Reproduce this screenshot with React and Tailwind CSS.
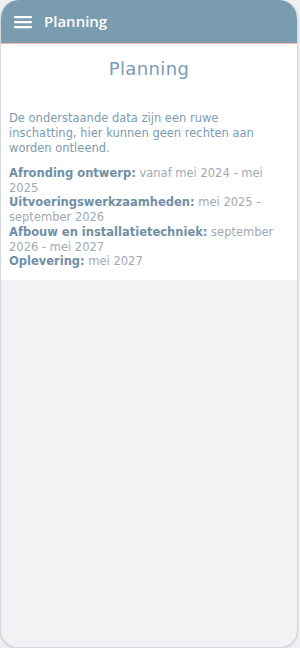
import React from "react";

const items = [
  { label: "Afronding ontwerp:", value: "vanaf mei 2024 - mei 2025" },
  { label: "Uitvoeringswerkzaamheden:", value: "mei 2025 - september 2026" },
  { label: "Afbouw en installatietechniek:", value: "september 2026 - mei 2027" },
  { label: "Oplevering:", value: "mei 2027" },
];

const App = () => {
  return (
    <div
      className="h-[648px] w-[300px] overflow-hidden bg-[#eef0f2]"
      style={{ fontFamily: '"DejaVu Sans", "Noto Sans", sans-serif' }}
    >
      <div className="relative h-full w-full">
        {/* cyan strip peeking behind the header */}
        <div className="absolute right-[3px] top-0 h-[40px] w-[160px] rounded-tr-[18px] bg-gradient-to-r from-[#18c3d6] to-[#119ad8]" />
        <div className="relative mr-[2px] flex h-full flex-col overflow-hidden rounded-[18px] border-x border-b border-[#d6d9dc] bg-[#f1f2f4] pt-[2px] shadow-[0_1px_2px_rgba(0,0,0,0.15)]">
          <header className="-mt-[2px] flex h-[44px] items-center gap-3 rounded-t-[18px] border-b border-[#f3b9a8] bg-[#7a9cb1] pl-[13px]">
            <svg width="18" height="14" viewBox="0 0 18 14" aria-hidden="true">
              <rect x="0" y="1" width="18" height="2.2" rx="1" fill="#fff" />
              <rect x="0" y="6" width="18" height="2.2" rx="1" fill="#fff" />
              <rect x="0" y="11" width="18" height="2.2" rx="1" fill="#fff" />
            </svg>
            <span className="text-[15px] font-semibold text-white" style={{ fontFamily: '"Open Sans", sans-serif' }}>
              Planning
            </span>
          </header>

          <section className="bg-white px-[8px] pb-[11px] pt-[11px]">
            <h1 className="text-center text-[18px] font-normal tracking-[0.4px] text-[#7a9cb4]">
              Planning
            </h1>
            <p className="mt-[29px] text-[11.5px] leading-[15px] text-[#7d9bb2]">
              De onderstaande data zijn een ruwe inschatting, hier kunnen geen rechten aan
              worden ontleend.
            </p>
            <div className="mt-[10px] text-[11.5px] leading-[14.7px]">
              {items.map((item) => (
                <p key={item.label}>
                  <span className="font-bold text-[#6f8fa6]">{item.label}</span>{" "}
                  <span className="text-[#9eaab5]">{item.value}</span>
                </p>
              ))}
            </div>
          </section>
          <div className="flex-1" />
        </div>
      </div>
    </div>
  );
};

export default App;
